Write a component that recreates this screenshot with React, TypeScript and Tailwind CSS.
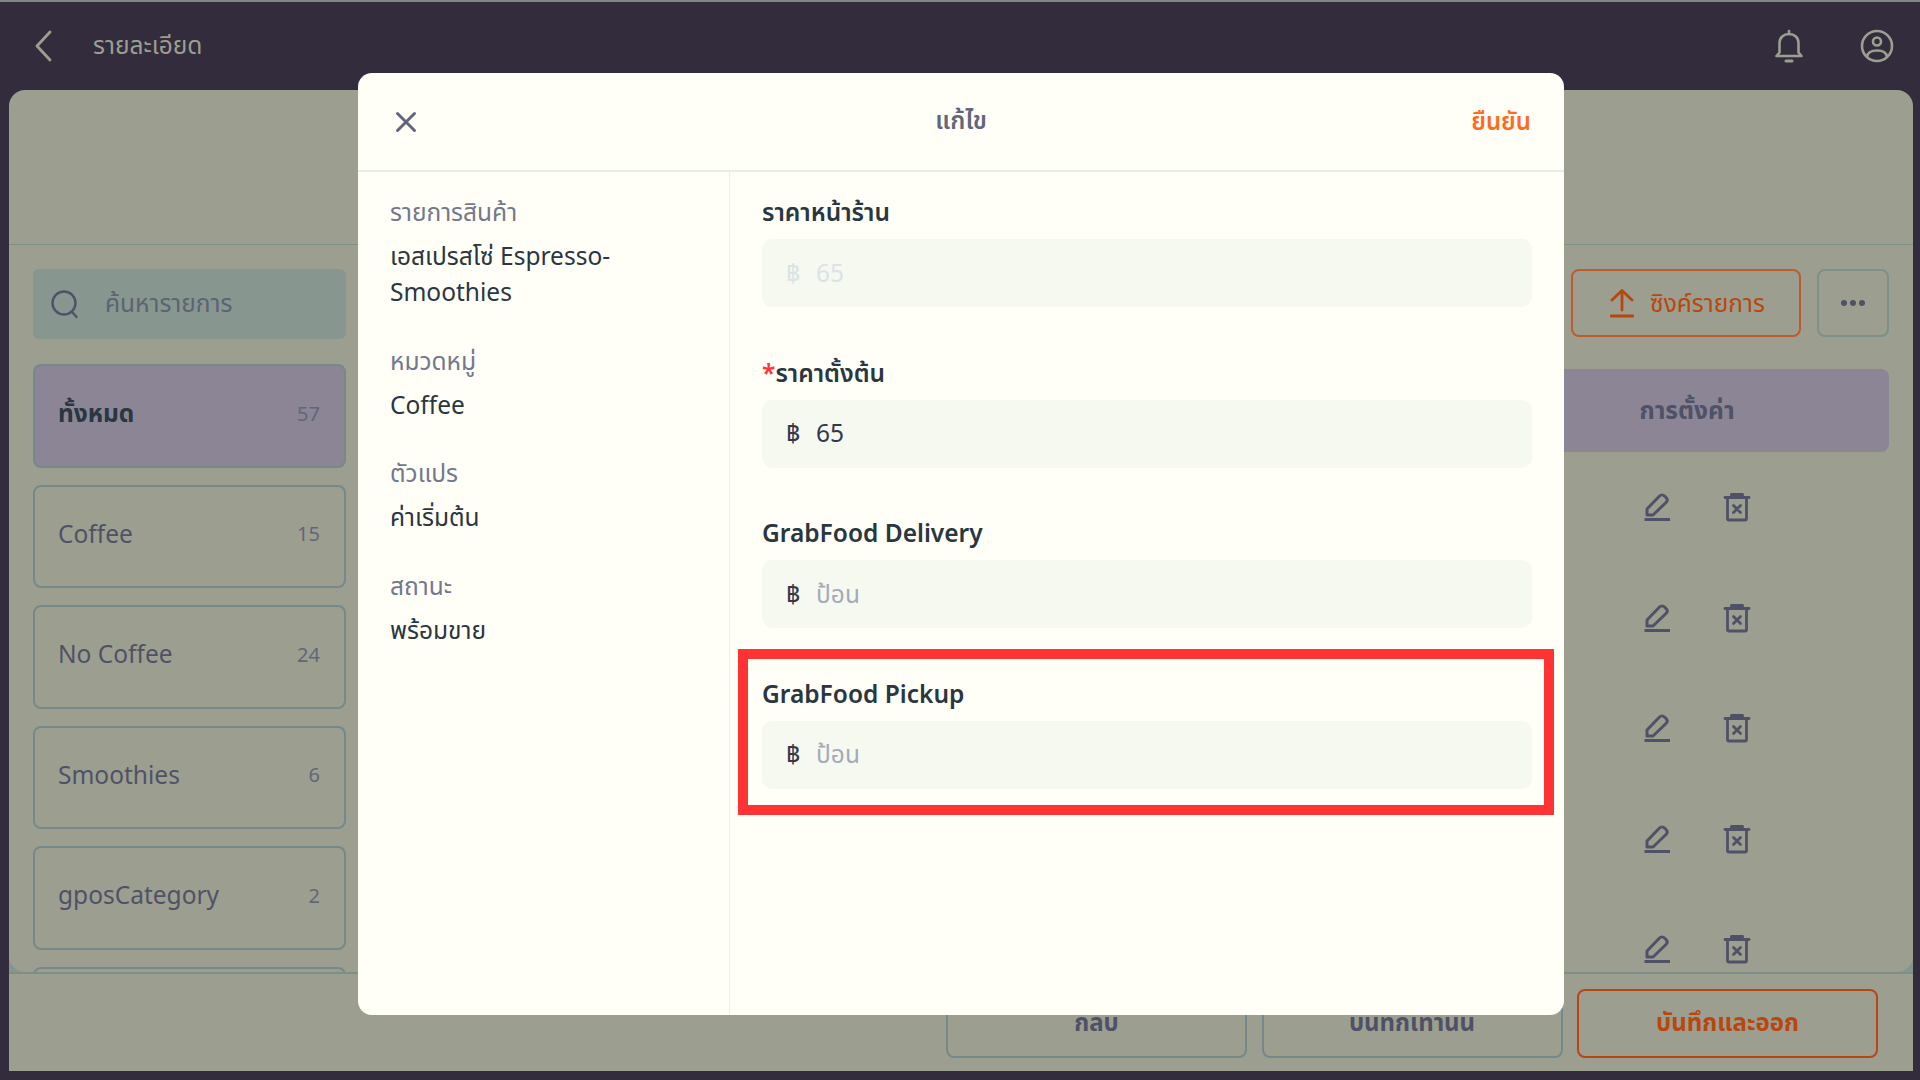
import React from "react";

const EditIcon = () => (
  <svg width="28" height="30" viewBox="0 0 28 30" fill="none" stroke="#4f5266" strokeWidth="3" strokeLinejoin="round">
    <path d="M4 17 L16.500 4 C18 2.500 20 2.500 21.500 4 L23 5.500 C24.500 7 24.500 9 23 10.500 L10 23 H4 Z" />
    <path d="M1.500 27.500 H27" />
  </svg>
);

const TrashIcon = () => (
  <svg width="28" height="30" viewBox="0 0 28 30" fill="none" stroke="#4f5266" strokeWidth="2.800" strokeLinecap="round" strokeLinejoin="round">
    <path d="M2 5.500 H26" />
    <path d="M8.500 5.500 V2.500 H19.500 V5.500" />
    <rect x="4.500" y="5.500" width="19" height="22.500" rx="1.500" />
    <path d="M10.500 13.500 L17.500 20.500 M17.500 13.500 L10.500 20.500" />
  </svg>
);

const Bell = () => (
  <svg width="28" height="34" viewBox="0 0 28 34" fill="none" stroke="#9c9f90" strokeWidth="2.600" strokeLinecap="round" strokeLinejoin="round">
    <path d="M14 2 V5" />
    <path d="M1.500 27 H26.500 L23.500 23.500 V14 C23.500 8.500 19.500 5 14 5 C8.500 5 4.500 8.500 4.500 14 V23.500 Z" />
    <path d="M11 32 H17" strokeWidth="3" />
  </svg>
);

const User = () => (
  <svg width="34" height="34" viewBox="0 0 34 34" fill="none" stroke="#9c9f90" strokeWidth="2.600">
    <circle cx="17" cy="17" r="15" />
    <circle cx="17" cy="12.500" r="4" />
    <path d="M7 28 C7.500 23.500 12 21.500 17 21.500 C22 21.500 26.500 23.500 27 28" />
  </svg>
);

const Search = () => (
  <svg width="30" height="30" viewBox="0 0 30 30" fill="none" stroke="#4f5266" strokeWidth="2.400" strokeLinecap="round">
    <circle cx="14" cy="14" r="11.500" />
    <path d="M23 24 L26.500 28" />
  </svg>
);

const Categories = [
  { name: "ทั้งหมด", count: "57", active: true },
  { name: "Coffee", count: "15" },
  { name: "No Coffee", count: "24" },
  { name: "Smoothies", count: "6" },
  { name: "gposCategory", count: "2" },
  { name: "", count: "" },
];

const Field = ({ label, value, muted, placeholder, required }: { label: string; value?: string; muted?: boolean; placeholder?: boolean; required?: boolean }) => (
  <div className="flex flex-col">
    <div className="h-[34px] text-[24.500px] leading-[34px] font-semibold text-[#2a3640] whitespace-nowrap">
      {required && <span className="text-[#ff3333]">*</span>}
      {label}
    </div>
    <div className="mt-[10px] h-[68px] rounded-[10px] bg-[#f5f9f0] flex items-center pl-[24px] text-[24.500px]">
      <span className={`w-[30px] ${muted ? "text-[#dbe3e6]" : "text-[#33384a]"}`}>฿</span>
      <span className={placeholder ? "text-[#a4abb8]" : muted ? "text-[#dbe3e6]" : "text-[#33384a]"}>{value}</span>
    </div>
  </div>
);

const Info = ({ label, value, className }: { label: string; value: React.ReactNode; className?: string }) => (
  <div className={className}>
    <div className="text-[24.500px] leading-[36px] text-[#73788c]">{label}</div>
    <div className="mt-[8px] text-[24.500px] leading-[36px] text-[#2a3640]">{value}</div>
  </div>
);

export default function App() {
  return (
    <div className="relative w-[1920px] h-[1080px] overflow-hidden bg-[#332c3c] font-['Noto_Sans','Noto_Sans_Thai',sans-serif] flex flex-col">
      <div className="h-[2px] bg-[#7d8a84]" />
      <header className="h-[88px] flex items-center pl-[34px] pr-[26px]">
        <svg width="20" height="34" viewBox="0 0 20 34" fill="none" stroke="#9c9f90" strokeWidth="2.800" strokeLinecap="round" strokeLinejoin="round">
          <path d="M16 3 L3 17 L16 31" />
        </svg>
        <span className="ml-[39px] pb-[2px] text-[24.500px] text-[#9c9f90]">รายละเอียด</span>
        <div className="ml-auto flex items-center gap-[57px]">
          <Bell />
          <User />
        </div>
      </header>

      <main className="ml-[9px] w-[1904px] h-[981px] bg-[#9c9f90] rounded-t-[16px] flex flex-col overflow-hidden">
        <div className="h-[155px] shrink-0 border-b border-[#7d9088]" />
        <div className="h-[729px] shrink-0 bg-[#85958f] border-b-2 border-[#7d9088]">
          <div className="h-full flex overflow-hidden bg-[#9c9f90] rounded-b-[16px]">
            <aside className="w-[337px] shrink-0 pl-[24px] pt-[24px]">
              <div className="w-[313px] h-[70px] rounded-[6px] bg-[#87978f] flex items-center pl-[17px]">
                <Search />
                <span className="ml-[25px] pb-[2px] text-[24.500px] text-[#5d6275]">ค้นหารายการ</span>
              </div>
              <div className="mt-[25px] flex flex-col gap-[17px]">
                {Categories.map((c, i) => (
                  <div
                    key={i}
                    className={`w-[313px] h-[103.500px] shrink-0 rounded-[8px] border-2 border-[#75898b] flex items-center justify-between pl-[23px] pr-[24px] pb-[4px] ${c.active ? "bg-[#8c8596]" : ""}`}
                  >
                    <span className={`text-[24.500px] ${c.active ? "font-bold text-[#2a3640]" : "text-[#4f5266]"}`}>{c.name}</span>
                    <span className="text-[20px] text-[#62667a]">{c.count}</span>
                  </div>
                ))}
              </div>
            </aside>
            <section className="flex-1 pl-[30px] pt-[24px] pr-[24px] flex flex-col items-end">
              <div className="flex gap-[16px]">
                <div className="w-[230px] h-[68px] rounded-[8px] border-2 border-[#bc5c2c] flex items-center justify-center gap-[16px] pl-[3px] text-[#b8470f] text-[24.500px]">
                  <svg width="24" height="30" viewBox="0 0 24 30" fill="none" stroke="#b8470f" strokeWidth="2.800" strokeLinecap="round" strokeLinejoin="round">
                    <path d="M12 22 V3 M2 12 L12 2.500 L22 12 M1 28 H23" />
                  </svg>
                  <span>ซิงค์รายการ</span>
                </div>
                <div className="w-[72px] h-[68px] rounded-[8px] border-2 border-[#7d9088] flex items-center justify-center gap-[3px]">
                  <span className="w-[6px] h-[6px] rounded-full bg-[#4f5266]" />
                  <span className="w-[6px] h-[6px] rounded-full bg-[#4f5266]" />
                  <span className="w-[6px] h-[6px] rounded-full bg-[#4f5266]" />
                </div>
              </div>
              <div className="mt-[32px] w-full h-[83px] rounded-[8px] bg-[#8c8596] flex items-center justify-end text-[24.500px] font-bold text-[#4f5266] shrink-0">
                <span className="w-[404px] text-center">การตั้งค่า</span>
              </div>
              {[0, 1, 2, 3, 4].map((r) => (
                <div key={r} className="h-[110.500px] shrink-0 flex items-center gap-[52px] pr-[138px]">
                  <EditIcon />
                  <TrashIcon />
                </div>
              ))}
            </section>
          </div>
        </div>
        <footer className="flex-1 flex justify-end gap-[14.500px] pt-[15px] pr-[35px]">
          {["กลับ", "บันทึกเท่านั้น"].map((t) => (
            <div key={t} className="w-[301px] h-[69px] rounded-[8px] border-2 border-[#75898b] flex items-center justify-center pb-[3px] text-[24px] font-bold text-[#4f5266]">
              {t}
            </div>
          ))}
          <div className="w-[301px] h-[69px] rounded-[8px] border-2 border-[#b8470f] flex items-center justify-center pb-[3px] text-[24px] font-bold text-[#b8470f]">
            บันทึกและออก
          </div>
        </footer>
      </main>

      {/* dialog */}
      <div className="absolute left-[358px] top-[73px] w-[1206px] h-[942px] rounded-[14px] bg-[#fffff7] flex flex-col overflow-hidden">
        <div className="relative h-[99px] shrink-0 border-b-2 border-[#e6eee8] flex items-center justify-between pl-[36px] pr-[33px]">
          <svg width="24" height="24" viewBox="0 0 24 24" fill="none" stroke="#62667a" strokeWidth="3" strokeLinecap="round">
            <path d="M3.500 3.500 L20.500 20.500 M20.500 3.500 L3.500 20.500" />
          </svg>
          <span className="absolute inset-x-0 text-center pb-[2px] text-[24.500px] font-semibold text-[#62667a]">แก้ไข</span>
          <span className="text-[24px] pb-[2px] font-semibold text-[#ff6a22]">ยืนยัน</span>
        </div>
        <div className="flex-1 flex">
          <div className="w-[372px] shrink-0 border-r border-[#e6f0ee] pl-[32px] pt-[22px] pr-[32px]">
            <Info label="รายการสินค้า" value={<>เอสเปรสโซ่ Espresso-<br />Smoothies</>} />
            <Info className="mt-[33px]" label="หมวดหมู่" value="Coffee" />
            <Info className="mt-[32px]" label="ตัวแปร" value="ค่าเริ่มต้น" />
            <Info className="mt-[33px]" label="สถานะ" value="พร้อมขาย" />
          </div>
          <div className="flex-1 pl-[32px] pr-[32px] pt-[23px] flex flex-col gap-[48.500px]">
            <Field label="ราคาหน้าร้าน" value="65" muted />
            <Field label="ราคาตั้งต้น" value="65" required />
            <Field label="GrabFood Delivery" value="ป้อน" placeholder />
            <Field label="GrabFood Pickup" value="ป้อน" placeholder />
          </div>
        </div>
      </div>

      {/* highlight */}
      <div className="absolute left-[738px] top-[649px] w-[816px] h-[166px] border-[10px] border-[#ff3333]" />
    </div>
  );
}
